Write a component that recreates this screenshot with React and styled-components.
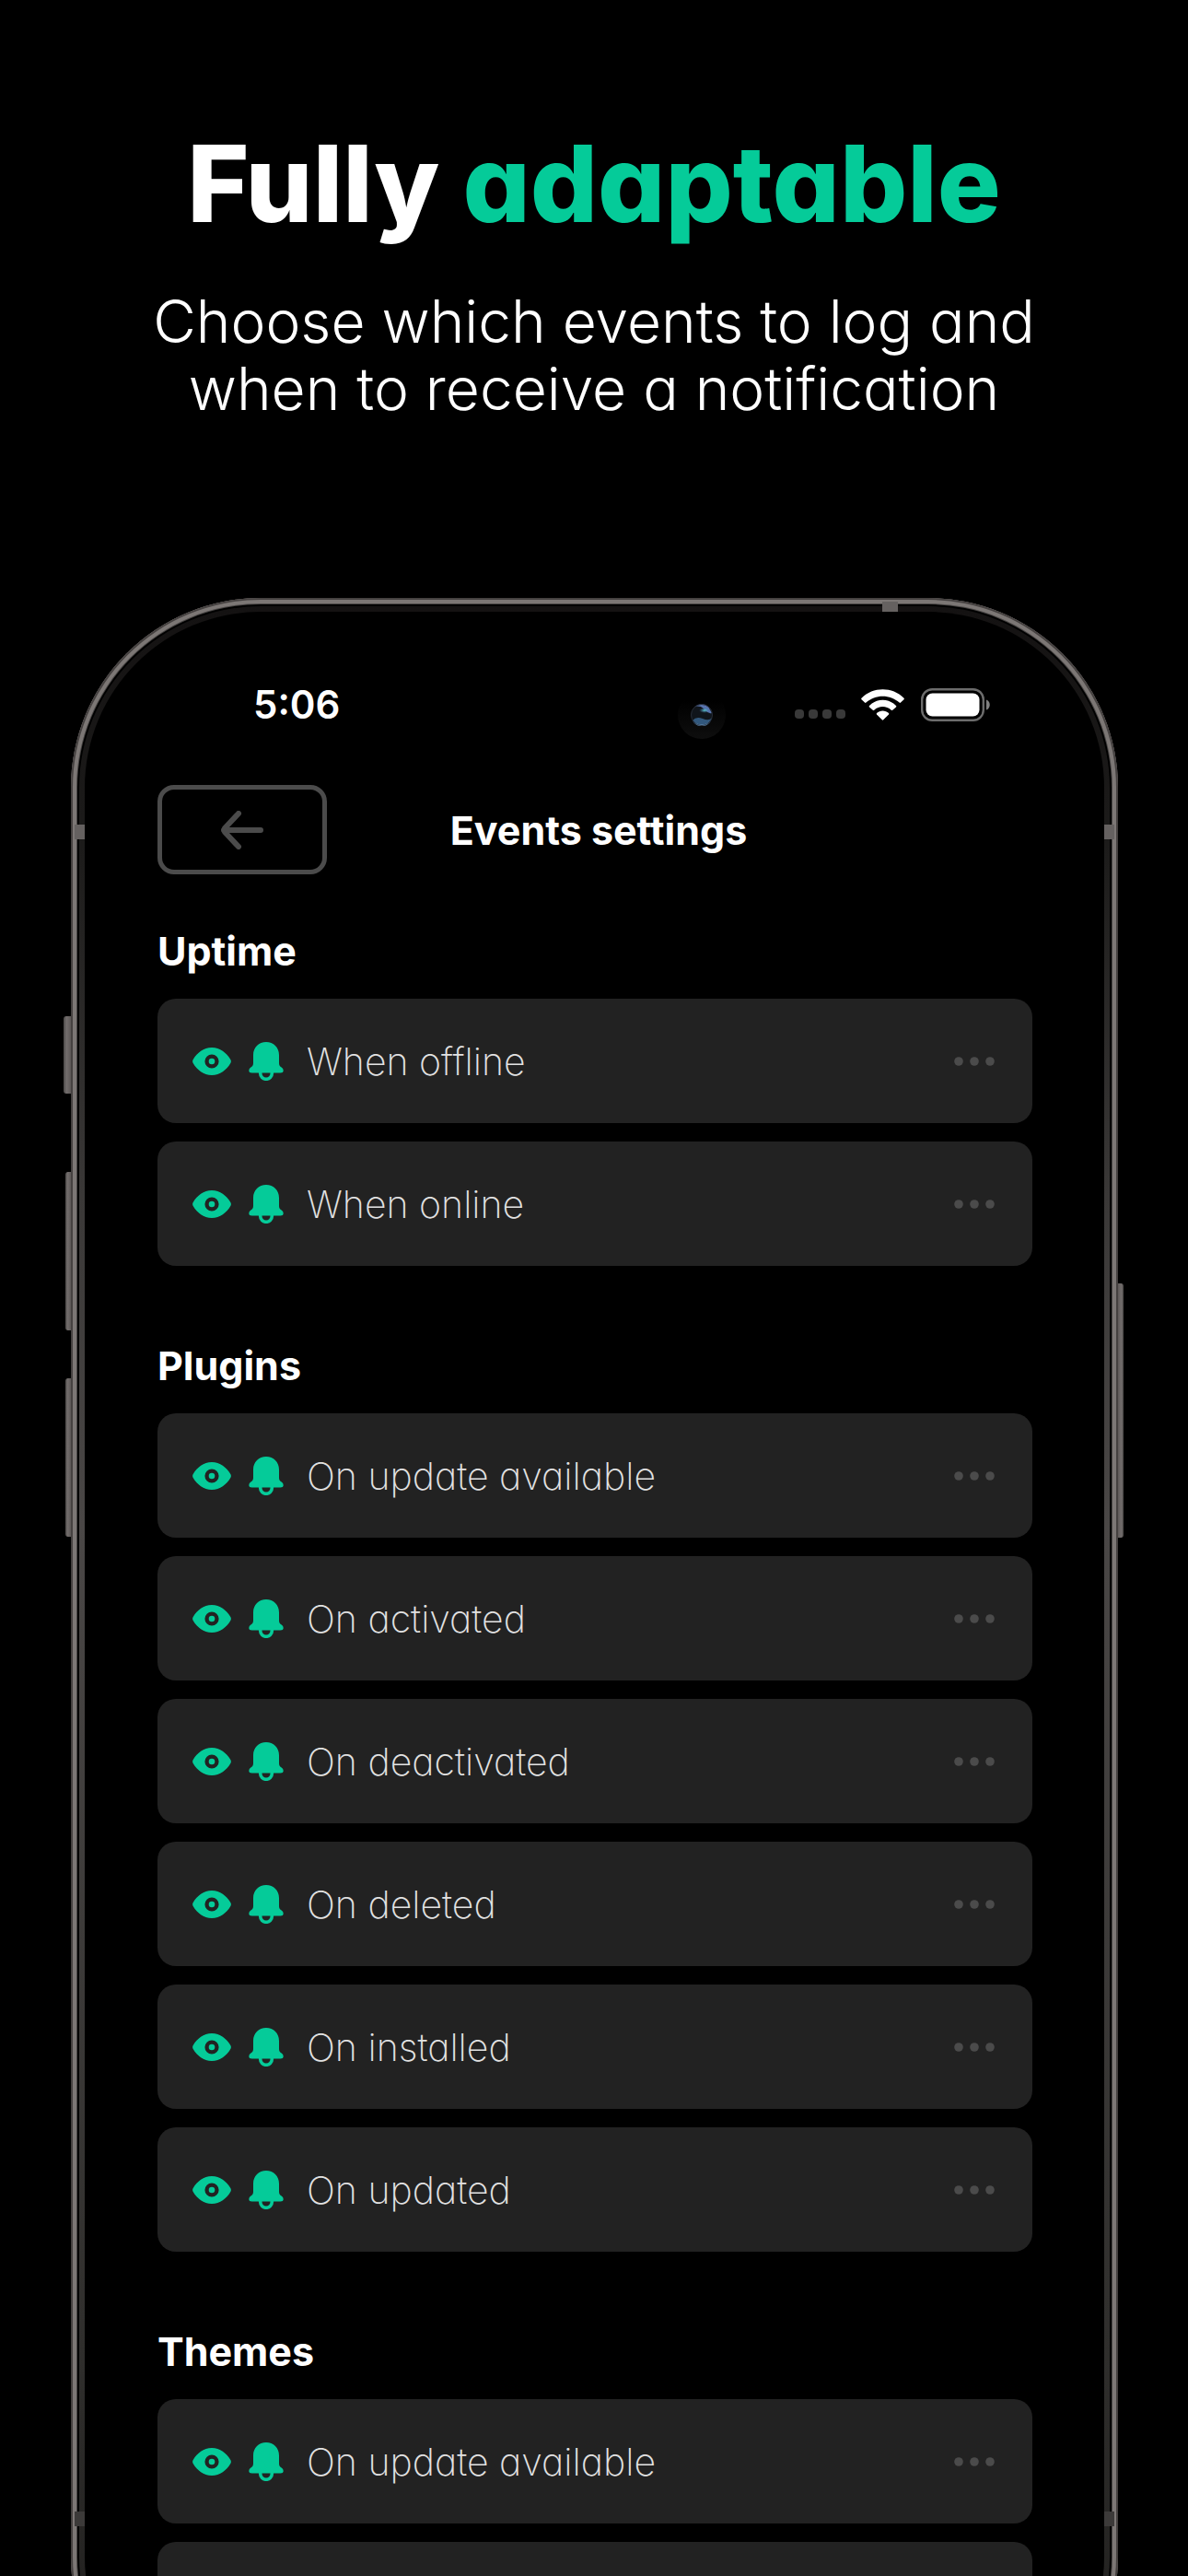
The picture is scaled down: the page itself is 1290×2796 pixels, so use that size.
import React from "react";
import styled, { createGlobalStyle } from "styled-components";

const green = "#05cb99";
const grey = "#4b4b4b";

const GlobalStyle = createGlobalStyle`
  * { box-sizing: border-box; }
  body { margin: 0; background: #000; color: #fff; }
  body, button { font-family: Inter, "Liberation Sans", sans-serif; font-feature-settings: "cv11"; }
`;

const Page = styled.main`
  height: 100vh;
  overflow: hidden;
  display: flex;
  flex-direction: column;
  background: #000;
`;

const Intro = styled.header`
  flex: none;
  height: 649px;
  padding-top: 128px;
  text-align: center;
`;

const Headline = styled.h1`
  margin: 0 0 40px;
  font-size: 115px;
  line-height: 144px;
  font-weight: 800;

  em { color: ${green}; font-style: normal; }
`;

const Lead = styled.p`
  margin: 0 auto;
  max-width: 1080px;
  font-size: 64px;
  line-height: 73px;
  font-weight: 300;
`;

const Phone = styled.section`
  position: relative;
  flex: none;
  margin: 0 76px 0 77px;
  padding: 9px;
  border-radius: 206px;
  background: #000;
  box-shadow:
    inset 0 0 0 2px #454140,
    inset 0 0 0 6px #7c7775,
    inset 0 0 0 7px #4a4746;
`;

const Bezel = styled.div`
  padding: 6px;
  border-radius: 197px;
  background: linear-gradient(#141212, #1c1b1a 260px, #3a3837 640px, #4a4746 1000px, #2f2e2c 1900px, #1c1b1a);
`;

const Screen = styled.div`
  padding: 67px 78px 72px 79px;
  border-radius: 191px;
  background: #000;
`;

const SideKey = styled.span`
  position: absolute;
  top: ${(p) => p.$top}px;
  ${(p) => p.$side}: -${(p) => p.$depth}px;
  width: ${(p) => p.$depth}px;
  height: ${(p) => p.$length}px;
  border-radius: ${(p) => (p.$side === "left" ? "3px 0 0 3px" : "0 3px 3px 0")};
  background: linear-gradient(${(p) => (p.$side === "left" ? "to right" : "to left")}, #4a4746, #736e6d 40%, #5d5857);
`;

const SideBand = styled.span`
  position: absolute;
  top: ${(p) => p.$top}px;
  ${(p) => p.$side}: 4px;
  width: 11px;
  height: 16px;
  background: ${(p) => p.$tone};
`;

const TopBand = styled.span`
  position: absolute;
  top: 4px;
  right: 239px;
  width: 17px;
  height: 11px;
  background: #656160;
`;

const StatusBar = styled.div`
  display: flex;
  align-items: center;
  height: 68px;
  padding: 0 45px 0 104px;
`;

const Time = styled.time`
  flex: 1;
  font-size: 42px;
  line-height: 52px;
  font-weight: 600;
`;

const Camera = styled.svg`
  width: 52px;
  height: 52px;
  margin: 22px 75px 0 0;
`;

const Signal = styled.span`
  display: flex;
  gap: 5px;
  margin: 20px 17px 0 0;

  i { width: 10px; height: 10px; border-radius: 4px; background: #393939; }
`;

const StatusIcon = styled.svg`
  display: block;
  margin-right: ${(p) => p.$gap || 0}px;
`;

const NavBar = styled.nav`
  display: grid;
  grid-template-columns: 184px 1fr 176px;
  align-items: center;
  margin-top: 53px;
`;

const BackButton = styled.button`
  display: flex;
  align-items: center;
  justify-content: center;
  height: 97px;
  padding: 0;
  border: 5px solid ${grey};
  border-radius: 18px;
  background: none;
  color: ${grey};
`;

const NavTitle = styled.h2`
  margin: 0;
  text-align: center;
  font-size: 43px;
  line-height: 52px;
  font-weight: 700;
`;

const Group = styled.section`
  margin-top: ${(p) => (p.$first ? 54 : 79)}px;
`;

const GroupTitle = styled.h3`
  margin: 0 0 22px;
  font-size: 43px;
  line-height: 59px;
  font-weight: 700;
`;

const List = styled.ul`
  display: flex;
  flex-direction: column;
  gap: 20px;
  margin: 0;
  padding: 0;
  list-style: none;
`;

const Row = styled.li`
  display: flex;
  align-items: center;
  height: 135px;
  padding: 0 41px 0 38px;
  border-radius: 20px;
  background: #222;
`;

const Label = styled.span`
  flex: 1;
  margin-left: 25px;
  color: #e2e2e2;
  font-size: 41px;
  line-height: 48px;
  font-weight: 200;
`;

const IconButton = styled.button`
  display: flex;
  margin: 0 ${(p) => p.$gap || 0}px 0 0;
  padding: 0;
  border: 0;
  background: none;
  color: ${(p) => p.$tone || green};
`;

const EyeIcon = () => (
  <svg width="42" height="30" viewBox="0 0 42 30" fill="currentColor" aria-hidden="true">
    <path fillRule="evenodd" d="M21 0C30 0 37 6 41 12.500Q42.800 15 41 17.500C37 24 30 30 21 30S5 24 1 17.500Q-.8 15 1 12.500C5 6 12 0 21 0ZM21 7.400a7.600 7.600 0 1 0 0 15.200a7.600 7.600 0 1 0 0-15.200Z" />
    <circle cx="21" cy="15" r="3.300" />
  </svg>
);

const BellIcon = () => (
  <svg width="38" height="42" viewBox="0 0 38 42" fill="currentColor" aria-hidden="true">
    <path d="M5 14C5 6 11 0 19 0S33 6 33 14V23C33 25.500 34 26.300 35.700 27.600Q37.700 29 37.700 31Q37.700 33.500 34.500 33.500H3.500Q.3 33.500 .3 31Q.3 29 2.300 27.600C4 26.300 5 25.500 5 23Z" />
    <path d="M12.700 33V34A6.300 6.300 0 0 0 25.300 34V33" fill="none" stroke="currentColor" strokeWidth="3.600" />
  </svg>
);

const MoreIcon = () => (
  <svg width="44" height="10" viewBox="0 0 44 10" fill="currentColor" aria-hidden="true">
    <circle cx="5" cy="5" r="4.800" />
    <circle cx="22" cy="5" r="4.800" />
    <circle cx="39" cy="5" r="4.800" />
  </svg>
);

const BackIcon = () => (
  <svg width="46" height="42" viewBox="0 0 46 42" fill="none" stroke="currentColor" strokeWidth="6" strokeLinecap="round" strokeLinejoin="round" aria-hidden="true">
    <path d="M43 21H3M19 3L4 19Q3 21 4 23L19 39" />
  </svg>
);

const WifiIcon = () => (
  <StatusIcon $gap={18} width="47" height="34" viewBox="0 0 47 34" fill="#fff" aria-hidden="true">
    <path d="M.5 9.800C13-2.800 34-2.800 46.500 9.800Q47.200 10.500 46.500 11.200L43 14.600Q42.300 15.200 41.600 14.600C31.500 5.300 15.500 5.300 5.400 14.600Q4.700 15.200 4 14.600L.5 11.200Q-.2 10.500 .5 9.800Z" />
    <path d="M9 18C17 9.500 30 9.500 38 18Q38.600 18.700 38 19.400L34.200 22.800Q33.500 23.400 32.800 22.800C27.500 17.900 19.500 17.900 14.200 22.800Q13.500 23.400 12.800 22.800L9 19.400Q8.400 18.700 9 18Z" />
    <path d="M17 26C20.500 22.500 26.500 22.500 30 26Q30.600 26.700 30 27.400L24.200 33.300Q23.500 34 22.800 33.300L17 27.400Q16.400 26.700 17 26Z" />
  </StatusIcon>
);

const BatteryIcon = () => (
  <StatusIcon width="76" height="36" viewBox="0 0 76 36" aria-hidden="true">
    <rect x="1.200" y="1.200" width="66.600" height="33.600" rx="11" fill="none" stroke="#6c6c6c" strokeWidth="2.400" />
    <rect x="5.500" y="5.500" width="58" height="25" rx="7" fill="#fff" />
    <path d="M71 12.500C76 14 76 22 71 23.500Z" fill="#808080" />
  </StatusIcon>
);

const CameraLens = () => (
  <Camera viewBox="0 0 52 52" aria-hidden="true">
    <defs>
      <linearGradient id="halo" x2="0" y2="1">
        <stop offset="0.200" stopColor="#000" />
        <stop offset="1" stopColor="#0e0e0e" />
      </linearGradient>
      <radialGradient id="glint">
        <stop offset="0" stopColor="#5fd6dc" />
        <stop offset="1" stopColor="#3c5d96" stopOpacity="0" />
      </radialGradient>
      <clipPath id="lens"><circle cx="26" cy="26" r="12" /></clipPath>
    </defs>
    <circle cx="26" cy="26" r="26" fill="url(#halo)" />
    <g clipPath="url(#lens)">
      <circle cx="26" cy="26" r="12" fill="#10151b" />
      <path d="M18 17Q26 11 33 17L37 24Q33 25 30 21Q25 15 18 17Z" fill="#5873ae" />
      <ellipse cx="29" cy="21" rx="6" ry="3" fill="url(#glint)" />
      <path d="M16 32Q20 27 27 30T37 29L34 38H18Z" fill="#32587d" />
      <path d="M18 34Q26 39 34 34L32 39H20Z" fill="#6c9bc8" />
    </g>
    <circle cx="26" cy="26" r="11.500" fill="none" stroke="#252b35" strokeWidth="1" />
  </Camera>
);

const groups = [
  { title: "Uptime", events: ["When offline", "When online"] },
  {
    title: "Plugins",
    events: ["On update available", "On activated", "On deactivated", "On deleted", "On installed", "On updated"],
  },
  { title: "Themes", events: ["On update available"], loading: true },
];

function EventRow({ name }) {
  return (
    <Row>
      <IconButton type="button" $gap={19} aria-label={`Log: ${name}`}><EyeIcon /></IconButton>
      <IconButton type="button" aria-label={`Notify: ${name}`}><BellIcon /></IconButton>
      <Label>{name}</Label>
      <IconButton type="button" $tone={grey} aria-label={`More: ${name}`}><MoreIcon /></IconButton>
    </Row>
  );
}

export default function App() {
  return (
    <Page>
      <GlobalStyle />
      <Intro>
        <Headline>Fully <em>adaptable</em></Headline>
        <Lead>Choose which events to log and<br />when to receive a notification</Lead>
      </Intro>
      <Phone>
        <SideKey $side="left" $top={454} $length={84} $depth={8} />
        <SideKey $side="left" $top={623} $length={172} $depth={6} />
        <SideKey $side="left" $top={847} $length={172} $depth={6} />
        <SideKey $side="right" $top={744} $length={276} $depth={6} />
        <Bezel>
          <Screen>
            <StatusBar>
              <Time>5:06</Time>
              <CameraLens />
              <Signal><i /><i /><i /><i /></Signal>
              <WifiIcon />
              <BatteryIcon />
            </StatusBar>
            <NavBar>
              <BackButton type="button" aria-label="Back"><BackIcon /></BackButton>
              <NavTitle>Events settings</NavTitle>
            </NavBar>
            {groups.map((group, index) => (
              <Group key={group.title} $first={index === 0}>
                <GroupTitle>{group.title}</GroupTitle>
                <List>
                  {group.events.map((name) => <EventRow key={name} name={name} />)}
                  {group.loading && <Row aria-busy="true" />}
                </List>
              </Group>
            ))}
          </Screen>
        </Bezel>
        <TopBand />
        <SideBand $side="left" $top={246} $tone="#656160" />
        <SideBand $side="right" $top={246} $tone="#656160" />
        <SideBand $side="left" $top={2077} $tone="#3c3a39" />
        <SideBand $side="right" $top={2077} $tone="#3c3a39" />
      </Phone>
    </Page>
  );
}
